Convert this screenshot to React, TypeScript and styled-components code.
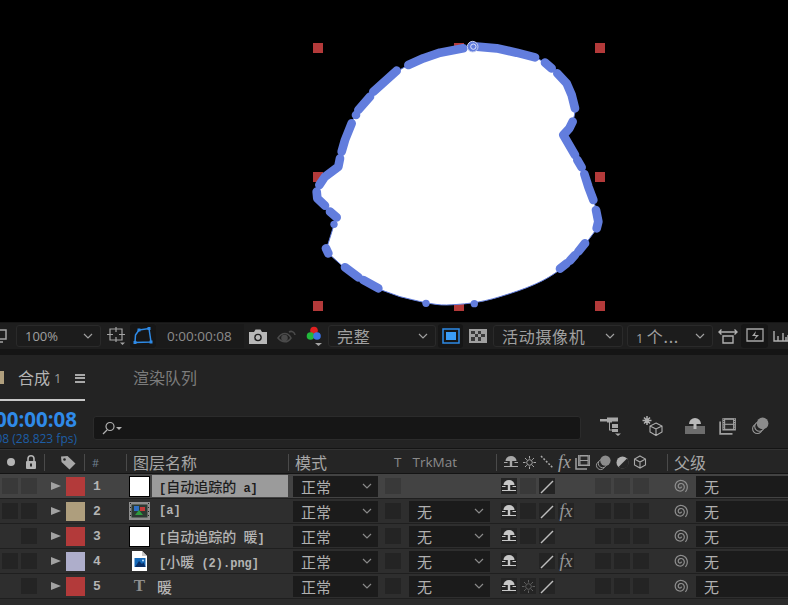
import React from 'react'
import styled, { createGlobalStyle } from 'styled-components'

const GlobalStyle = createGlobalStyle`
  html, body {
    margin: 0;
    padding: 0;
    background: #232323;
  }
`

const CJK = `"Noto Sans CJK SC", "Open Sans", sans-serif`
const LATIN = `"Open Sans", "Noto Sans CJK SC", sans-serif`
const MONO = `"Liberation Mono", "Noto Sans CJK SC", monospace`

const Page = styled.div`
  width: 788px;
  height: 605px;
  overflow: hidden;
  display: flex;
  flex-direction: column;
  background: #232323;
  font-family: ${CJK};
`

const Viewer = styled.svg`
  display: block;
  flex: none;
  width: 788px;
  height: 322px;
  background: #000;
`

const Toolbar = styled.div`
  flex: none;
  height: 26px;
  display: flex;
  align-items: center;
  background: #1e1e1e;
  border-top: 1px solid #161616;
  margin-left: -9px;
  width: 800px;
`

const Strip = styled.div`
  flex: none;
  height: 6px;
  background: #151515;
`

const Select = styled.div<{ $w: number; $ml?: number }>`
  flex: none;
  box-sizing: border-box;
  width: ${(p) => p.$w}px;
  height: 22px;
  margin-left: ${(p) => p.$ml ?? 0}px;
  padding: 0 7px 0 8px;
  display: flex;
  align-items: center;
  justify-content: space-between;
  background: #1c1c1c;
  border: 1px solid #2a2a2a;
  border-radius: 3px;
  color: #a0a0a0;
  font-size: 16px;
  letter-spacing: 0.7px;
`

const SelectLatin = styled.span<{ $size: number }>`
  font-family: ${LATIN};
  font-size: ${(p) => p.$size}px;
  letter-spacing: 0;
`

const ToolIcon = styled.div<{ $w: number; $ml?: number; $dark?: boolean }>`
  flex: none;
  width: ${(p) => p.$w}px;
  height: 24px;
  margin-left: ${(p) => p.$ml ?? 0}px;
  display: flex;
  align-items: center;
  justify-content: center;
  background: ${(p) => (p.$dark ? '#161616' : 'transparent')};
  border-radius: 3px;
`

const TimeReadout = styled.div`
  flex: none;
  width: 88px;
  height: 24px;
  box-sizing: border-box;
  padding-left: 11px;
  display: flex;
  align-items: center;
  background: #1a1a1a;
  color: #8c8c8c;
  font-family: ${LATIN};
  font-size: 13.5px;
`

const TabBar = styled.div`
  flex: none;
  height: 46px;
  display: flex;
  align-items: stretch;
`

const ActiveTab = styled.div`
  flex: none;
  width: 85px;
  box-sizing: border-box;
  height: 46px;
  display: flex;
  align-items: center;
  white-space: nowrap;
  border-bottom: 2px solid #c8c8c8;
  color: #b4b4b4;
  font-size: 16px;
`

const TabSwatch = styled.div`
  flex: none;
  width: 4px;
  height: 13px;
  background: #b09f7d;
  margin-right: 14px;
`

const TabCount = styled.span`
  flex: none;
  font-family: ${LATIN};
  font-size: 13px;
  color: #9a9a9a;
  margin-left: 4px;
  margin-top: 2px;
`

const TabMenu = styled.div`
  flex: none;
  width: 10px;
  height: 9px;
  margin-left: 14px;
  margin-right: -10px;
  border-top: 2px solid #a8a8a8;
  border-bottom: 2px solid #a8a8a8;
  box-sizing: border-box;
  position: relative;
  margin-top: 2px;
  &::after {
    content: '';
    position: absolute;
    left: 0;
    right: 0;
    top: 1.5px;
    height: 2px;
    background: #a8a8a8;
  }
`

const InactiveTab = styled.div`
  margin-left: 48px;
  display: flex;
  align-items: center;
  color: #7c7c7c;
  font-size: 16px;
  padding-bottom: 2px;
`

const TimeRow = styled.div`
  flex: none;
  height: 48px;
  display: flex;
  align-items: center;
  border-bottom: 1px solid #141414;
  box-sizing: border-box;
`

const TimeBlock = styled.div`
  flex: none;
  width: 77px;
  margin-right: 16px;
  overflow: hidden;
  display: flex;
  flex-direction: column;
  align-items: flex-end;
  font-family: ${LATIN};
  white-space: nowrap;
  padding-top: 3px;
`

const TimeCode = styled.div`
  color: #2f8ae8;
  font-size: 20.5px;
  font-weight: 700;
  line-height: 24px;
`

const Fps = styled.div`
  color: #1d5ea6;
  font-size: 12px;
  line-height: 15px;
`

const Search = styled.div`
  flex: none;
  width: 488px;
  height: 24px;
  box-sizing: border-box;
  margin-top: 6px;
  padding-left: 8px;
  display: flex;
  align-items: center;
  background: #161616;
  border: 1px solid #2b2b2b;
  border-radius: 3px;
`

const SearchTools = styled.div`
  margin-left: 19px;
  margin-top: 2px;
  display: flex;
  align-items: center;
`

const SearchTool = styled.div<{ $ml: number }>`
  display: flex;
  margin-left: ${(p) => p.$ml}px;
`

const HeaderRow = styled.div`
  flex: none;
  height: 25px;
  box-sizing: border-box;
  display: grid;
  grid-template-columns: 44px 40px 42px 162px 208px 171px 121px;
  background: #252525;
  border-bottom: 1px solid #141414;
  border-top: 1px solid #333;
`

const HeadCell = styled.div<{ $sep?: boolean; $pl?: number; $gap?: number }>`
  position: relative;
  display: flex;
  align-items: center;
  gap: ${(p) => p.$gap ?? 0}px;
  padding-left: ${(p) => p.$pl ?? 0}px;
  padding-bottom: 2px;
  color: #a6a6a6;
  font-size: 16px;
  &::before {
    content: '';
    display: ${(p) => (p.$sep ? 'block' : 'none')};
    position: absolute;
    left: 0;
    top: 4px;
    bottom: 5px;
    width: 1px;
    background: #4a4a4a;
  }
`

const HeadLatin = styled.span<{ $ml?: number; $color?: string; $size?: number }>`
  font-family: ${LATIN};
  font-size: ${(p) => p.$size ?? 13.5}px;
  color: ${(p) => p.$color ?? '#8b8b8b'};
  margin-left: ${(p) => p.$ml ?? 0}px;
`

const LayerRow = styled.div<{ $selected?: boolean }>`
  flex: none;
  height: 25px;
  box-sizing: border-box;
  display: grid;
  grid-template-columns: 44px 22px 19px 44px 23px 136px 93px 24px 91px 94px 77px 29px 92px;
  align-items: center;
  background: ${(p) => (p.$selected ? '#434343' : '#2e2e2e')};
  border-bottom: 1px solid #1f1f1f;
`

const SwitchGroup = styled.div<{ $pl?: number }>`
  display: flex;
  gap: 3px;
  padding-left: ${(p) => p.$pl ?? 0}px;
`

const Box = styled.div<{ $light?: boolean; $off?: boolean }>`
  flex: none;
  width: 16px;
  height: 16px;
  display: flex;
  align-items: center;
  justify-content: center;
  background: ${(p) => (p.$off ? 'transparent' : p.$light ? '#393939' : '#242424')};
`

const Triangle = styled.div`
  justify-self: center;
  margin-left: 1px;
  width: 0;
  height: 0;
  border-left: 10px solid #a2a2a2;
  border-top: 4.5px solid transparent;
  border-bottom: 4.5px solid transparent;
`

const Swatch = styled.div<{ $c: string }>`
  width: 19px;
  height: 19px;
  background: ${(p) => p.$c};
`

const Num = styled.div`
  padding-left: 8px;
  color: #b4b4b4;
  font-family: ${MONO};
  font-weight: 700;
  font-size: 13px;
`

const Thumb = styled.div`
  width: 21px;
  height: 20px;
  display: flex;
  align-items: center;
  justify-content: center;
`

const SolidThumb = styled.div`
  width: 19px;
  height: 19px;
  background: #fff;
  border: 1px solid #000;
`

const TypeT = styled.span`
  font-family: "Liberation Serif", serif;
  font-weight: 700;
  font-size: 17px;
  color: #8f8f8f;
`

const Name = styled.div<{ $selected?: boolean; $pl?: number }>`
  align-self: stretch;
  margin: 1px 0 1px 0;
  box-sizing: border-box;
  padding-left: ${(p) => p.$pl ?? 7}px;
  display: flex;
  align-items: center;
  white-space: pre;
  background: ${(p) => (p.$selected ? '#9b9b9b' : 'transparent')};
  color: ${(p) => (p.$selected ? '#1d1d1d' : '#b4b4b4')};
  font-family: ${MONO};
  font-weight: 700;
  font-size: 12px;
`

const NameCjk = styled.span<{ $size: number }>`
  font-family: ${CJK};
  font-weight: 500;
  font-size: ${(p) => p.$size}px;
`

const CellSelect = styled.div<{ $w: number; $ml: number }>`
  box-sizing: border-box;
  width: ${(p) => p.$w}px;
  height: 21px;
  margin-left: ${(p) => p.$ml}px;
  padding: 0 6px 0 8px;
  display: flex;
  align-items: center;
  justify-content: space-between;
  background: #1b1b1b;
  color: #b0b0b0;
  font-size: 15px;
`

const BoxSlot = styled.div<{ $pl: number }>`
  padding-left: ${(p) => p.$pl}px;
`

const Fill = styled.div`
  flex: 1;
  background: #2b2b2b;
`

const FxMark = styled.span<{ $dim?: boolean }>`
  font-family: "Liberation Serif", serif;
  font-style: italic;
  font-size: 18px;
  color: ${(p) => (p.$dim ? '#969696' : '#a0a0a0')};
  line-height: 1;
`

const SpiralSlot = styled.div`
  padding-left: 6px;
  display: flex;
`

const G1 = '#a4a4a4'

// spiral points from centre outwards, for the parent pick whip
const spiralPath = (() => {
  const pts: string[] = []
  for (let i = 0; i <= 60; i++) {
    const a = (i / 60) * Math.PI * 4.2 + 0.2
    const r = 0.8 + (i / 60) * 6.4
    pts.push(`${(7.5 + r * Math.cos(a)).toFixed(2)} ${(7.5 + r * Math.sin(a)).toFixed(2)}`)
  }
  return `M${pts.join('L')}`
})()

const Chevron = ({ c = '#a0a0a0' }: { c?: string }) => (
  <svg width="10" height="6" viewBox="0 0 10 6" fill="none">
    <path d="M1 1l4 4 4-4" stroke={c} strokeWidth="1.2" />
  </svg>
)

const ShyIcon = ({ c = '#c8c8c8', w = 16 }: { c?: string; w?: number }) => (
  <svg width={w} height={w} viewBox="0 0 16 16">
    <path d="M2.5 7a5.500 5 0 0 1 11 0z" fill={c} />
    <rect x="6.8" y="7" width="2.4" height="5" fill={c} />
    <rect x="1" y="8" width="3.5" height="1" fill={c} />
    <rect x="11.5" y="8" width="3.5" height="1" fill={c} />
    <rect x="1" y="12" width="14" height="1" fill={c} />
  </svg>
)

const SunIcon = ({ c = '#a8a8a8' }: { c?: string }) => (
  <svg width="13" height="13" viewBox="0 0 13 13" stroke={c} strokeWidth="1" fill="none">
    <circle cx="6.5" cy="6.5" r="2.8" />
    <path d="M6.5 0v2.500M6.500 10.500V13M0 6.500h2.500M10.500 6.500H13M2 2l1.800 1.800M9.200 9.200L11 11M2 11l1.800-1.800M9.200 3.800L11 2" />
  </svg>
)

const Slash = () => (
  <svg width="16" height="16" viewBox="0 0 16 16">
    <path d="M2 15L14 3" stroke="#bdbdbd" strokeWidth="1.4" />
  </svg>
)

const Spiral = () => (
  <svg width="15" height="15" viewBox="0 0 15 15" fill="none" stroke="#8f8f8f" strokeWidth="1.2">
    <path d={spiralPath} />
  </svg>
)

const FilmThumb = () => (
  <svg width="21" height="18" viewBox="0 0 21 18">
    <rect x="0" y="0" width="21" height="18" fill="#8f8f8f" />
    <rect x="2.5" y="2.5" width="16" height="13" fill="#2d3a33" />
    <path d="M1 1h1v1H1zM1 5h1v1H1zM1 9h1v1H1zM1 13h1v1H1zM19 1h1v1h-1zM19 5h1v1h-1zM19 9h1v1h-1zM19 13h1v1h-1z" fill="#222" />
    <rect x="5" y="4" width="5" height="5" fill="#2f6fc4" />
    <rect x="11" y="5" width="5" height="4" fill="#c23a3a" />
    <path d="M10 8l4 5H6z" fill="#2f9a3f" />
  </svg>
)

const ImageThumb = () => (
  <svg width="15" height="20" viewBox="0 0 15 20">
    <path d="M0 0h10l5 5v15H0z" fill="#fff" />
    <path d="M10 0l5 5h-5z" fill="#c8c8c8" />
    <rect x="2.5" y="7" width="11" height="9" fill="#1569b8" />
    <path d="M3 16l4-6 3 3 1.500-1.500 2 4.500z" fill="#0a2f66" />
    <circle cx="11" cy="9.5" r="1" fill="#bfe2ff" />
  </svg>
)

const Lock = () => (
  <svg width="12" height="14" viewBox="0 0 12 14">
    <path d="M3 6V3.800a3 3 0 0 1 6 0V6" stroke="#b4b4b4" strokeWidth="1.6" fill="none" />
    <rect x="1" y="6" width="10" height="8" rx="1" fill="#b4b4b4" />
    <rect x="5" y="8.5" width="2" height="3" fill="#2a2a2a" />
  </svg>
)

const Tag = () => (
  <svg width="16" height="15" viewBox="0 0 16 15">
    <path d="M1 1.500l6.500-.5 8 7.500-6 6L1.500 7z" fill="#a8a8a8" />
    <circle cx="4.5" cy="4.5" r="1.3" fill="#252525" />
  </svg>
)

const FilmSwitch = ({ s = 16 }: { s?: number }) => (
  <svg width={s} height={s} viewBox="0 0 16 16">
    <rect x="3" y="1" width="12" height="11" fill="#a0a0a0" />
    <rect x="5.5" y="2.500" width="7" height="3.500" fill="#2a2a2a" />
    <rect x="5.5" y="7" width="7" height="3.500" fill="#2a2a2a" />
    <path d="M3.800 2h.700M3.800 4h.700M3.800 6h.700M3.800 8h.700M3.800 10h.700M13.500 2h.700M13.500 4h.700M13.500 6h.700M13.500 8h.700M13.500 10h.700" stroke="#2a2a2a" />
    <path d="M1 4v11h11" stroke="#a0a0a0" strokeWidth="1.5" fill="none" />
  </svg>
)

const MotionBlur = ({ s = 18 }: { s?: number }) => (
  <svg width={s} height={s} viewBox="0 0 18 18" fill="none">
    <circle cx="6" cy="12" r="4.5" stroke="#9a9a9a" />
    <circle cx="8" cy="10" r="4.5" stroke="#9a9a9a" fill="#252525" />
    <circle cx="11" cy="7" r="5.5" fill="#8c8c8c" />
  </svg>
)

const Cube = ({ s = 14 }: { s?: number }) => (
  <svg width={s} height={s} viewBox="0 0 14 14" fill="none" stroke="#a8a8a8" strokeWidth="1.1">
    <path d="M7 1l5.500 3v6L7 13l-5.500-3V4zM1.500 4L7 7l5.500-3M7 7v6" />
  </svg>
)

const layers = [
  { n: 1, color: '#b33a3a', name: '[自动追踪的 a]', thumb: 'solid', sw: 2, sun: false, fx: false },
  { n: 2, color: '#ae9e7d', name: '[a]', thumb: 'film', sw: 2, sun: false, fx: true },
  { n: 3, color: '#b33a3a', name: '[自动追踪的 暖]', thumb: 'solid', sw: 1, sun: false, fx: false },
  { n: 4, color: '#aeaecb', name: '[小暖 (2).png]', thumb: 'image', sw: 2, sun: false, fx: true },
  { n: 5, color: '#b33a3a', name: '暖', thumb: 'text', sw: 1, sun: true, fx: false },
]

const handles = [
  [318, 48], [459, 48], [600, 48],
  [318, 177], [600, 177],
  [318, 306], [459, 306], [600, 306],
]

const outline =
  'M518 50C590 52 650 66 705 82C745 100 780 135 805 170C815 195 825 220 825 240C825 262 815 285 790 315L825 375L845 420L865 470L880 510L892 550L895 590L850 650L790 710C750 745 700 770 600 800C560 812 520 822 440 825C400 826 350 812 300 800L230 775L170 740L135 715L85 670L80 655L102 585L110 562L95 548L70 525C55 515 45 500 50 485C50 470 60 455 75 440L110 410L120 385L135 330L150 285L170 250L215 185L290 125L325 105L410 70L480 55Z'

const strokes = [
  'M325 105L370 85L420 68L490 55',
  'M530 50L590 55L650 68L705 82',
  'M735 98L755 115',
  'M772 130L800 160L815 195L825 235',
  'M818 275L808 295L790 315L825 375',
  'M832 390L845 412',
  'M853 432L865 470L880 510',
  'M888 540L895 575L890 595',
  'M855 640L835 665',
  'M825 675L810 692',
  'M800 700L780 716',
  'M135 712L175 742',
  'M190 750L235 775',
  'M78 655L85 670',
  'M90 545L110 562',
  'M75 527L52 505L50 485',
  'M58 465L75 440L115 410L120 385',
  'M125 365L135 330L155 280',
  'M168 255L168 255',
  'M175 240L210 200',
  'M220 185L290 122',
]

// CJK runs sit larger than the mono latin in layer names
const LayerName = ({ text, size }: { text: string; size: number }) => (
  <span>
    {text.split(/([\u4e00-\u9fff]+)/).map((part, i) =>
      /[\u4e00-\u9fff]/.test(part) ? (
        <NameCjk key={i} $size={size}>
          {part}
        </NameCjk>
      ) : (
        part
      )
    )}
  </span>
)

const App: React.FC = (): React.ReactElement => (
  <Page>
    <GlobalStyle />
    <Viewer viewBox="0 0 788 322">
      {handles.map(([x, y]) => (
        <rect key={`${x}-${y}`} x={x - 5} y={y - 5} width="10" height="10" fill="#b33a3a" />
      ))}
      <g transform="translate(300 30) scale(0.33333)">
        <path d={outline} fill="#fff" stroke="#627ddd" strokeWidth="3" />
        {strokes.map((d) => (
          <path key={d} d={d} fill="none" stroke="#627ddd" strokeWidth="26" strokeLinecap="round" strokeLinejoin="round" />
        ))}
        <circle cx="378" cy="820" r="11" fill="#627ddd" />
        <circle cx="523" cy="821" r="11" fill="#627ddd" />
        <circle cx="102" cy="583" r="11" fill="#627ddd" />
        <circle cx="518" cy="50" r="16" fill="#627ddd" stroke="#c8d0f0" strokeWidth="3" />
        <circle cx="520" cy="50" r="8" fill="none" stroke="#dfe4fa" strokeWidth="3" />
      </g>
    </Viewer>

    <Toolbar>
      <ToolIcon $w={18}>
        <svg width="16" height="16" viewBox="0 0 16 16" fill="none" stroke={G1} strokeWidth="1.5">
          <path d="M2 2h12v9H2zM5 14h6" />
        </svg>
      </ToolIcon>
      <Select $w={85} $ml={7}>
        <SelectLatin $size={13}>100%</SelectLatin>
        <Chevron />
      </Select>
      <ToolIcon $w={24} $ml={3}>
        <svg width="20" height="20" viewBox="0 0 20 20" fill="none" stroke={G1} strokeWidth="1.2">
          <path d="M4 3h12v11H4zM1 8.500h6M13 8.500h6M10 1v5M10 11v5" />
          <path d="M14 16.500h5l-2.500 2.500z" fill={G1} stroke="none" />
        </svg>
      </ToolIcon>
      <ToolIcon $w={26} $ml={2} $dark>
        <svg width="20" height="18" viewBox="0 0 20 18" fill="none" stroke="#2e8ae6" strokeWidth="1.5">
          <path d="M6 3L16 1.500 18 15 2 15.500 2.500 8z" />
          <rect x="4.5" y="1.5" width="3" height="3" fill="#2e8ae6" stroke="none" />
          <rect x="14.5" y="0" width="3" height="3" fill="#2e8ae6" stroke="none" />
          <rect x="16.5" y="13.5" width="3" height="3" fill="#2e8ae6" stroke="none" />
          <rect x="0.5" y="14" width="3" height="3" fill="#2e8ae6" stroke="none" />
        </svg>
      </ToolIcon>
      <TimeReadout>0:00:00:08</TimeReadout>
      <ToolIcon $w={20} $ml={4}>
        <svg width="18" height="15" viewBox="0 0 18 15">
          <path d="M0 3h5l1.500-2.500h5L13 3h5v12H0z" fill="#b8b8b8" />
          <circle cx="9" cy="8.5" r="3.8" fill="#1e1e1e" />
          <circle cx="9" cy="8.5" r="2.4" fill="#b8b8b8" />
        </svg>
      </ToolIcon>
      <ToolIcon $w={20} $ml={9}>
        <svg width="20" height="15" viewBox="0 0 20 15" fill="none" stroke="#4a4a4a" strokeWidth="1.6">
          <path d="M1 9c4-6 10-6 13 0-3 5-9 5-13 0z" />
          <circle cx="7.5" cy="9" r="2.5" fill="#4a4a4a" />
          <path d="M12 3a4 4 0 0 1 6 3" />
        </svg>
      </ToolIcon>
      <ToolIcon $w={18} $ml={9}>
        <svg width="18" height="20" viewBox="0 0 18 20">
          <circle cx="8" cy="4.5" r="3.8" fill="#e02020" />
          <circle cx="4.5" cy="10" r="3.8" fill="#22b83c" />
          <circle cx="11" cy="10" r="3.8" fill="#3c74e6" />
          <path d="M9 17h7l-3.500 3z" fill={G1} />
        </svg>
      </ToolIcon>
      <Select $w={108} $ml={4}>
        <span>完整</span>
        <Chevron />
      </Select>
      <ToolIcon $w={25} $ml={2} $dark>
        <svg width="18" height="16" viewBox="0 0 18 16">
          <rect x="1" y="1" width="16" height="14" fill="none" stroke="#2e8ae6" strokeWidth="1.5" />
          <rect x="4" y="4" width="10" height="8" fill="#3a9cf5" />
        </svg>
      </ToolIcon>
      <ToolIcon $w={24} $ml={3}>
        <svg width="18" height="14" viewBox="0 0 18 14">
          <rect width="18" height="14" fill="#a0a0a0" />
          <path d="M2 2h4v3H2zM9 2h3v3H9zM6 5h3v3H6zM12 5h4v3h-4zM2 8h4v4H2zM9 8h3v4H9z" fill="#3a3a3a" />
        </svg>
      </ToolIcon>
      <Select $w={130} $ml={3}>
        <span>活动摄像机</span>
        <Chevron />
      </Select>
      <Select $w={86} $ml={4}>
        <span>
          <SelectLatin $size={13}>1 </SelectLatin>个...
        </span>
        <Chevron />
      </Select>
      <ToolIcon $w={22} $ml={4}>
        <svg width="20" height="16" viewBox="0 0 20 16" fill="none" stroke="#b0b0b0" strokeWidth="1.4">
          <path d="M1 4h18M3.500 1.500L1 4l2.500 2.500M16.500 1.500L19 4l-2.500 2.500M5 8h10v7H5z" />
        </svg>
      </ToolIcon>
      <ToolIcon $w={27} $ml={2} $dark>
        <svg width="18" height="16" viewBox="0 0 18 16" fill="none" stroke="#a8a8a8" strokeWidth="1.3">
          <path d="M1 1h16v12H1z" />
          <path d="M10 3L6 8h4l-2 4 5-5H9z" fill="#a8a8a8" stroke="none" />
        </svg>
      </ToolIcon>
      <ToolIcon $w={16} $ml={5}>
        <svg width="16" height="14" viewBox="0 0 16 14" fill="none" stroke="#b0b0b0" strokeWidth="1.4">
          <path d="M1 2v10h14V6M5 12V7M10 12V4M13 12V8" />
        </svg>
      </ToolIcon>
    </Toolbar>
    <Strip />

    <TabBar>
      <ActiveTab>
        <TabSwatch />
        合成
        <TabCount>1</TabCount>
        <TabMenu />
      </ActiveTab>
      <InactiveTab>渲染队列</InactiveTab>
    </TabBar>

    <TimeRow>
      <TimeBlock>
        <TimeCode>0:00:00:08</TimeCode>
        <Fps>00008 (28.823 fps)</Fps>
      </TimeBlock>
      <Search>
        <svg width="20" height="14" viewBox="0 0 20 14" fill="none" stroke="#b0b0b0" strokeWidth="1.2">
          <circle cx="8" cy="5.5" r="4" />
          <path d="M5 9L1 13" />
          <path d="M14 6h6l-3 3z" fill="#b0b0b0" stroke="none" />
        </svg>
      </Search>
      <SearchTools>
        <SearchTool $ml={0}>
          <svg width="21" height="20" viewBox="0 0 21 20" fill="#a8a8a8">
            <rect x="0" y="3" width="7" height="2.5" />
            <rect x="7" y="1.5" width="5" height="5" />
            <rect x="12" y="1.5" width="6" height="4" />
            <rect x="12" y="8" width="6" height="4" />
            <rect x="12" y="13" width="6" height="3" />
            <path d="M9 6v8.500h3v-1h-2V6z" />
            <path d="M15 17.500h6l-3 2.500z" />
          </svg>
        </SearchTool>
        <SearchTool $ml={21}>
          <svg width="21" height="21" viewBox="0 0 21 21" fill="none" stroke="#b0b0b0" strokeWidth="1.1">
            <path d="M5 1v9M0.500 5.500h9M2 2.500l6 6M8 2.500l-6 6" strokeWidth="1.5" />
            <path d="M14 8l6 3v6l-6 3.500-6-3.500v-6zM8 11l6 3 6-3M14 14v6.500" />
          </svg>
        </SearchTool>
        <SearchTool $ml={22}>
          <svg width="20" height="18" viewBox="0 0 20 18">
            <rect x="0" y="9" width="20" height="8" fill="#6d6d6d" />
            <path d="M4 7a6 6 0 0 1 12 0z" fill="#b8b8b8" />
            <rect x="8.5" y="7" width="3" height="5" fill="#b8b8b8" />
          </svg>
        </SearchTool>
        <SearchTool $ml={14}>
          <FilmSwitch s={18} />
        </SearchTool>
        <SearchTool $ml={14}>
          <MotionBlur s={19} />
        </SearchTool>
      </SearchTools>
    </TimeRow>

    <HeaderRow>
      <HeadCell $pl={7} $gap={10}>
        <svg width="8" height="8" viewBox="0 0 8 8">
          <circle cx="4" cy="4" r="4" fill="#b4b4b4" />
        </svg>
        <Lock />
      </HeadCell>
      <HeadCell $sep $pl={16}>
        <Tag />
      </HeadCell>
      <HeadCell $sep $pl={8}>
        <HeadLatin $size={11} $color="#6f7f8f">#</HeadLatin>
      </HeadCell>
      <HeadCell $sep $pl={7}>
        图层名称
      </HeadCell>
      <HeadCell $sep $pl={7}>
        模式
        <HeadLatin $ml={67}>T</HeadLatin>
        <HeadLatin $ml={11}>TrkMat</HeadLatin>
      </HeadCell>
      <HeadCell $sep $pl={7} $gap={4}>
        <ShyIcon c="#a8a8a8" />
        <SunIcon />
        <svg width="14" height="14" viewBox="0 0 14 14">
          <path d="M1 1l12 12" stroke="#a8a8a8" strokeWidth="1.5" strokeDasharray="2 1.5" />
        </svg>
        <FxMark>fx</FxMark>
        <FilmSwitch />
        <MotionBlur s={17} />
        <svg width="13" height="13" viewBox="0 0 13 13">
          <circle cx="6.5" cy="6.5" r="6" fill="#b0b0b0" />
          <path d="M11 2.500a6 6 0 0 1-8.500 8.500z" fill="#252525" />
        </svg>
        <Cube />
      </HeadCell>
      <HeadCell $sep $pl={7}>
        父级
      </HeadCell>
    </HeaderRow>

    {layers.map((l) => {
      const selected = l.n === 1
      return (
        <LayerRow key={l.n} $selected={selected}>
          <SwitchGroup $pl={2}>
            <Box $light={selected} $off={l.sw === 1} />
            <Box $light={selected} />
          </SwitchGroup>
          <Triangle />
          <Swatch $c={l.color} />
          <Num>{l.n}</Num>
          <Thumb>
            {l.thumb === 'solid' && <SolidThumb />}
            {l.thumb === 'film' && <FilmThumb />}
            {l.thumb === 'image' && <ImageThumb />}
            {l.thumb === 'text' && <TypeT>T</TypeT>}
          </Thumb>
          <Name $selected={selected} $pl={l.thumb === 'text' ? 5 : 7}>
            <LayerName text={l.name} size={l.thumb === 'text' ? 15 : 14} />
          </Name>
          <CellSelect $w={85} $ml={5}>
            <span>正常</span>
            <Chevron c="#8a8a8a" />
          </CellSelect>
          <BoxSlot $pl={4}>
            <Box $light={selected} />
          </BoxSlot>
          {selected ? (
            <div />
          ) : (
            <CellSelect $w={81} $ml={4}>
              <span>无</span>
              <Chevron c="#8a8a8a" />
            </CellSelect>
          )}
          <SwitchGroup $pl={5}>
            <Box>
              <ShyIcon />
            </Box>
            <Box $light={selected} $off={l.n === 4}>
              {l.sun && <SunIcon c="#5f5f5f" />}
            </Box>
            <Box>
              <Slash />
            </Box>
            {l.fx && (
              <Box>
                <FxMark $dim>fx</FxMark>
              </Box>
            )}
          </SwitchGroup>
          <SwitchGroup $pl={5}>
            <Box $light={selected} />
            <Box $light={selected} />
            <Box $light={selected} />
          </SwitchGroup>
          <SpiralSlot>
            <Spiral />
          </SpiralSlot>
          <CellSelect $w={92} $ml={0}>
            <span>无</span>
          </CellSelect>
        </LayerRow>
      )
    })}
    <Fill />
  </Page>
)

export default App
